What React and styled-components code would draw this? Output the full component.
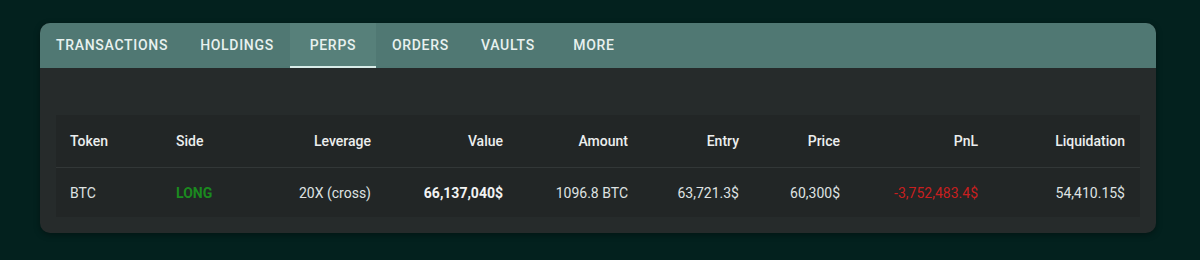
import React, { useState } from "react";
import styled, { createGlobalStyle } from "styled-components";

const GlobalStyle = createGlobalStyle`
  html, body {
    margin: 0;
    padding: 0;
    background: #03211e;
    font-family: Roboto, "Liberation Sans", sans-serif;
  }
`;

const tabs = ["Transactions", "Holdings", "Perps", "Orders", "Vaults", "More"];

const columns = [
  { key: "token", label: "Token", align: "left" },
  { key: "side", label: "Side", align: "left" },
  { key: "leverage", label: "Leverage", align: "right" },
  { key: "value", label: "Value", align: "right" },
  { key: "amount", label: "Amount", align: "right" },
  { key: "entry", label: "Entry", align: "right" },
  { key: "price", label: "Price", align: "right" },
  { key: "pnl", label: "PnL", align: "right" },
  { key: "liquidation", label: "Liquidation", align: "right" },
];

const positions = [
  {
    token: "BTC",
    side: "LONG",
    leverage: "20X (cross)",
    value: "66,137,040$",
    amount: "1096.8 BTC",
    entry: "63,721.3$",
    price: "60,300$",
    pnl: "-3,752,483.4$",
    liquidation: "54,410.15$",
  },
];

const App = () => {
  const [active, setActive] = useState("Perps");

  const tone = (key, row) => {
    if (key === "side") return row.side === "LONG" ? "long" : "short";
    if (key === "pnl") return row.pnl.startsWith("-") ? "loss" : "gain";
    if (key === "value") return "strong";
    return undefined;
  };

  return (
    <React.Fragment>
      <GlobalStyle />
      <Page>
        <Card>
          <TabBar>
            {tabs.map((t) => (
              <Tab key={t} $active={t === active} onClick={() => setActive(t)}>
                {t}
              </Tab>
            ))}
          </TabBar>
          <Body>
            <Table>
              <HeadRow>
                {columns.map((c) => (
                  <HeadCell key={c.key} $align={c.align}>
                    {c.label}
                  </HeadCell>
                ))}
              </HeadRow>
              {positions.map((row) => (
                <Row key={row.token}>
                  {columns.map((c) => (
                    <Cell key={c.key} $align={c.align} $tone={tone(c.key, row)}>
                      {row[c.key]}
                    </Cell>
                  ))}
                </Row>
              ))}
            </Table>
          </Body>
        </Card>
      </Page>
    </React.Fragment>
  );
};

const Page = styled.div`
  width: 1200px;
  height: 260px;
  padding: 23px 44px 0 40px;
  box-sizing: border-box;
`;

const Card = styled.div`
  background: #262b2b;
  border-radius: 10px;
  overflow: hidden;
  box-shadow: 0 2px 6px rgba(0, 0, 0, 0.35);
`;

const TabBar = styled.div`
  display: flex;
  height: 45px;
  background: #507873;
`;

const Tab = styled.button`
  min-width: 86px;
  padding: 0 16px 1px;
  border: none;
  background: ${(p) => (p.$active ? "#57807a" : "transparent")};
  color: #e8f1ef;
  font-family: Roboto, "Liberation Sans", sans-serif;
  font-size: 14px;
  font-weight: 500;
  letter-spacing: 0.7px;
  text-transform: uppercase;
  box-shadow: ${(p) => (p.$active ? "inset 0 -2px 0 #d8ece8" : "none")};
  cursor: pointer;
`;

const Body = styled.div`
  padding: 47px 16px 16px;
`;

const Table = styled.div`
  background: #222626;
`;

const grid = `
  display: grid;
  grid-template-columns: 106px 106px 118px 132px 125px 111px 101px 138px 147px;
`;

const HeadRow = styled.div`
  ${grid}
  height: 52px;
  border-bottom: 1px solid #323737;
`;

const Row = styled.div`
  ${grid}
  height: 49px;
`;

const HeadCell = styled.div`
  display: flex;
  align-items: center;
  justify-content: ${(p) => (p.$align === "right" ? "flex-end" : "flex-start")};
  padding: 0 15px 0 14px;
  color: #eceeee;
  font-size: 14px;
  font-weight: 500;
`;

const toneColor = {
  long: "#1b8a1f",
  short: "#c62121",
  loss: "#c81f1f",
  gain: "#1b8a1f",
  strong: "#f2f3f3",
};

const Cell = styled.div`
  display: flex;
  align-items: center;
  justify-content: ${(p) => (p.$align === "right" ? "flex-end" : "flex-start")};
  padding: 0 15px 0 14px;
  color: ${(p) => toneColor[p.$tone] || "#dfe2e2"};
  font-size: 14px;
  font-weight: ${(p) => (p.$tone === "long" || p.$tone === "strong" ? 700 : 400)};
`;

export default App;
